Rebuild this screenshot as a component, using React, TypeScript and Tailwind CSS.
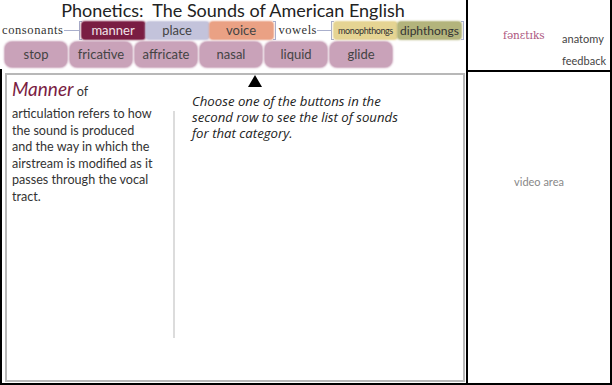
const sans = { fontFamily: 'Lato, "Open Sans", sans-serif' };
const serif = { fontFamily: '"Liberation Serif", serif' };

function TopButton({ label, className }: { label: string; className: string }) {
  return (
    <div className={`flex h-[17px] w-[63px] items-center justify-center rounded-[3px] ${className}`}>
      {label}
    </div>
  );
}

function Bracket({ side }: { side: 'l' | 'r' }) {
  return (
    <div
      className={`h-[19px] w-[3px] border-y border-[#a9afcc] ${side === 'l' ? 'border-l' : 'border-r'}`}
    />
  );
}

const mannerTypes = ['stop', 'fricative', 'affricate', 'nasal', 'liquid', 'glide'];

const mannerLines = [
  'articulation refers to how',
  'the sound is produced',
  'and the way in which the',
  'airstream is modified as it',
  'passes through the vocal',
  'tract.',
];

const hintLines = [
  'Choose one of the buttons in the',
  'second row to see the list of sounds',
  'for that category.',
];

export default function App() {
  return (
    <div className="flex h-[385px] w-[612px] overflow-hidden bg-white text-[#333]" style={sans}>
      {/* left: header + content panel */}
      <div className="flex h-full w-[466px] flex-col">
        <h1 className="h-[20px] text-center text-[18px] leading-[20px] text-[#222]">
          Phonetics:&nbsp; The Sounds of American English
        </h1>

        <div className="flex h-[21px] items-center">
          <span className="pl-[2px] text-[12.5px] tracking-[0.6px] text-[#333]" style={serif}>
            consonants
          </span>
          <div className="h-px w-[15px] bg-[#a9afcc]" />
          <Bracket side="l" />
          <div className="flex gap-[1px] text-[13px]">
            <TopButton label="manner" className="bg-[#7a1d43] text-[#f3e4ea] shadow-[0_0_2px_1px_#7a1d43]" />
            <TopButton label="place" className="bg-[#c3c3db] text-[#444] shadow-[0_0_2px_1px_#c3c3db]" />
            <TopButton label="voice" className="bg-[#eaa184] text-[#444] shadow-[0_0_2px_1px_#eaa184]" />
          </div>
          <Bracket side="r" />
          <span className="pl-[3px] text-[12.5px] tracking-[0.5px] text-[#333]" style={serif}>
            vowels
          </span>
          <div className="h-px w-[14px] bg-[#a9afcc]" />
          <Bracket side="l" />
          <div className="flex gap-[1px]">
            <TopButton label="monophthongs" className="bg-[#e5d493] text-[9px] tracking-[-0.4px] text-[#333] shadow-[0_0_2px_1px_#e5d493]" />
            <TopButton label="diphthongs" className="bg-[#b3b47c] text-[12px] text-[#333] shadow-[0_0_2px_1px_#b3b47c]" />
          </div>
          <Bracket side="r" />
        </div>

        <div className="mt-[1px] flex h-[25px] gap-[3px] pl-[5px]">
          {mannerTypes.map((t) => (
            <div
              key={t}
              className="flex w-[62px] items-center justify-center rounded-[7px] bg-[#c9a2b9] text-[13px] text-[#444] shadow-[0_0_2px_1px_#c9a2b9]"
            >
              {t}
            </div>
          ))}
        </div>

        <div className="mt-[2px] flex-1 border-b-2 border-l-2 border-black pb-px pl-[3px] pr-px pt-[4px]">
          <div className="relative flex h-full border-2 border-[#b8b8b8] bg-white">
            <svg className="absolute left-[241px] top-0" width="14" height="12" viewBox="0 0 14 12">
              <polygon points="7,0 14,12 0,12" fill="#000" />
            </svg>

            <div className="w-[166px] shrink-0 pl-[5px] pt-[3px] text-[12.6px] text-[#333]">
              <div className="h-[22px] leading-[22px]">
                <span className="text-[19px] italic text-[#7a1d43]">Manner</span> of
              </div>
              <div className="mt-[6px] leading-[16.5px]">
                {mannerLines.map((l) => (
                  <div key={l} className="whitespace-nowrap">{l}</div>
                ))}
              </div>
            </div>

            <div className="mt-[36px] h-[227px] w-[2px] bg-[#dcdcdc]" />

            <div
              className="pl-[17px] pt-[18px] text-[13.2px] italic leading-[16px] text-[#222]"
              style={{ fontFamily: '"Open Sans", Lato, sans-serif' }}
            >
              {hintLines.map((l) => (
                <div key={l} className="whitespace-nowrap">{l}</div>
              ))}
            </div>
          </div>
        </div>
      </div>

      {/* right: nav + video */}
      <div className="flex h-full w-[146px] flex-col border-b-2 border-l-2 border-r-2 border-black">
        <div className="flex h-[72px] border-b-2 border-black pt-[28px]">
          <span className="ml-[35px] text-[10.5px] text-[#ad5680]" style={{ fontFamily: '"DejaVu Serif", serif' }}>
            fənɛtɪks
          </span>
          <div className="ml-auto flex flex-col gap-[5px] pr-[4px] pt-[3px] text-[11px] text-[#444]">
            <span>anatomy</span>
            <span>feedback</span>
          </div>
        </div>
        <div className="flex-1 pt-[102px] text-center text-[11px] text-[#888]">video area</div>
      </div>
    </div>
  );
}
